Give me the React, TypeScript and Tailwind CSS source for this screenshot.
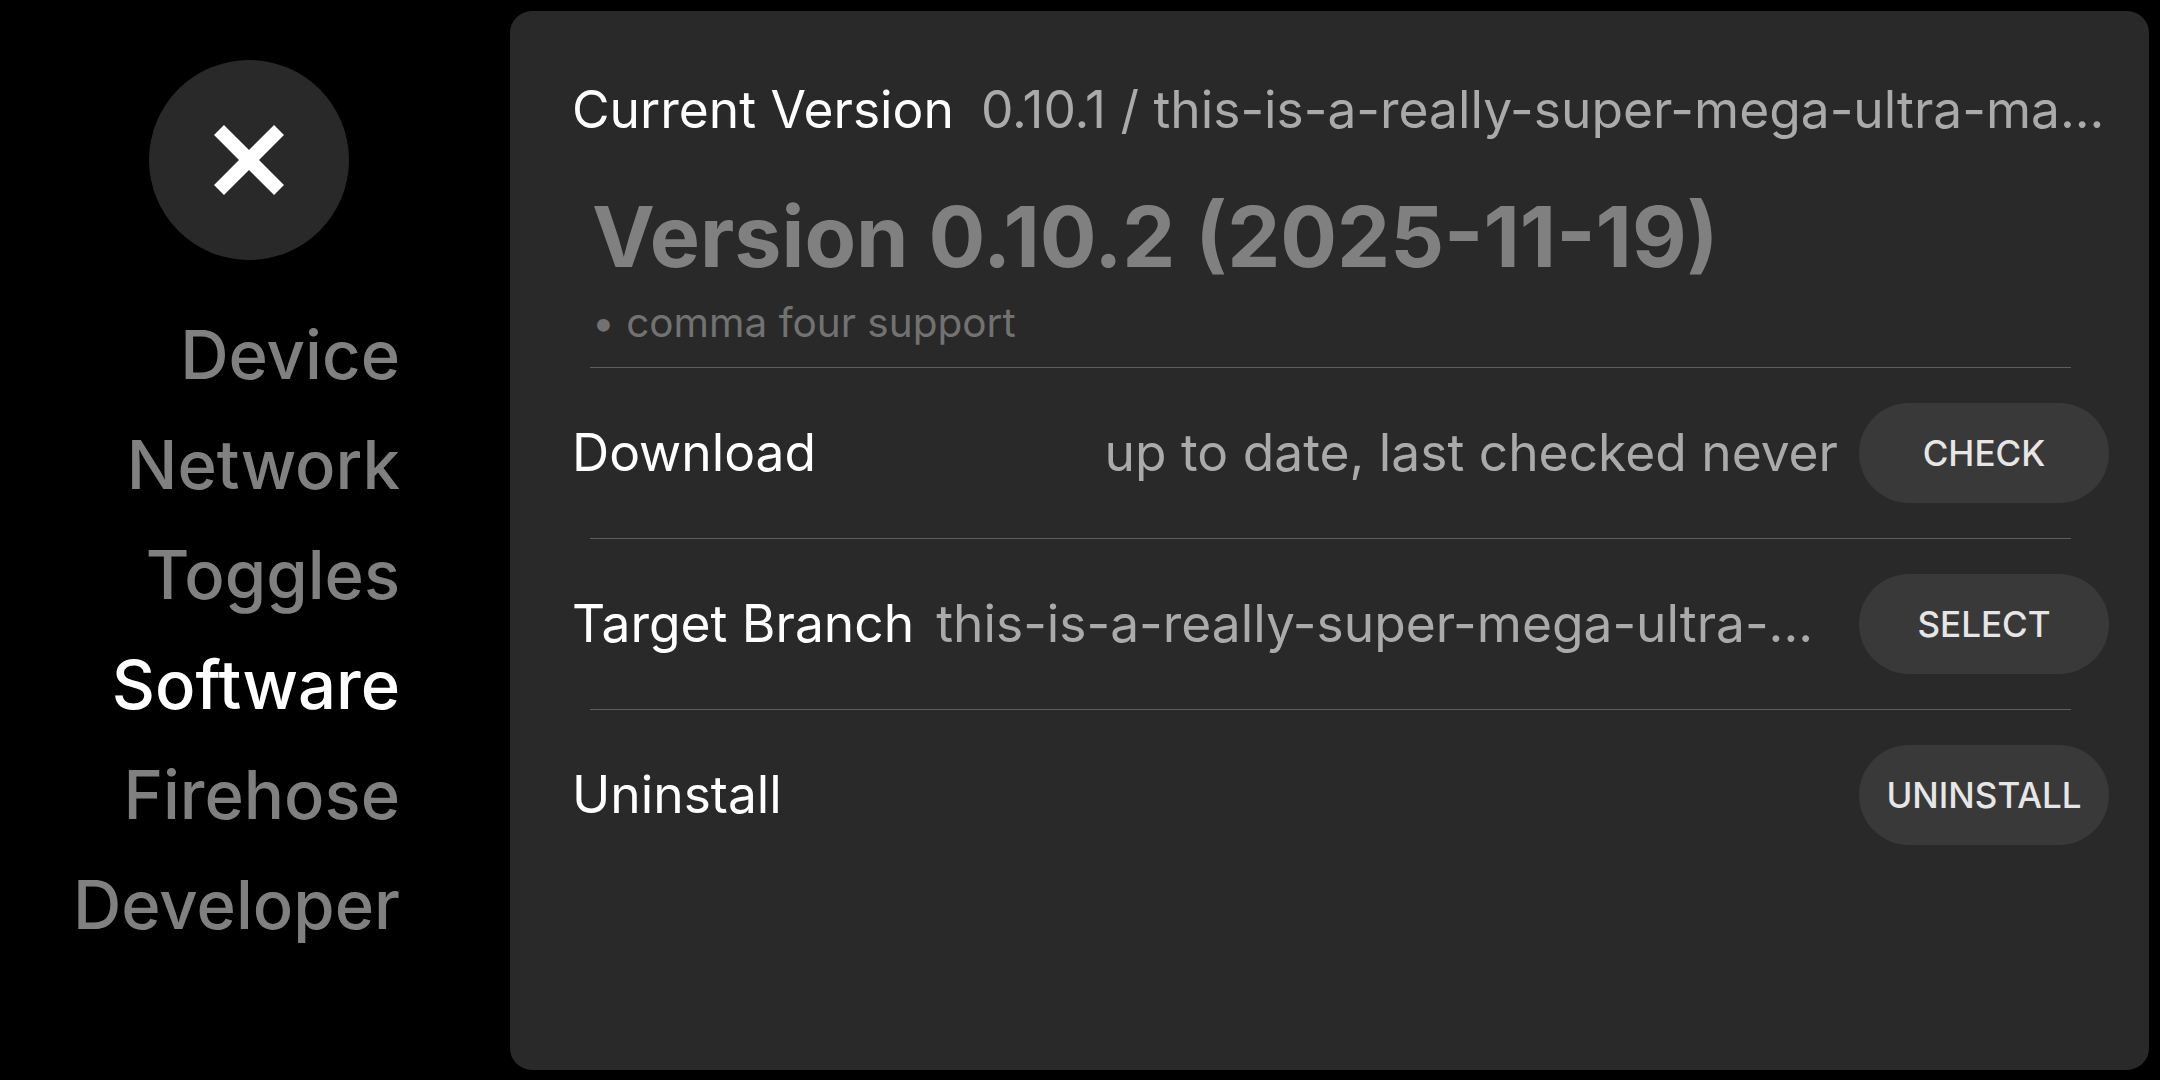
import React from "react";

const navItems = ["Device", "Network", "Toggles", "Software", "Firehose", "Developer"];

function CloseIcon() {
  return (
    <svg width="70" height="70" viewBox="0 0 70 70">
      <line x1="5" y1="5" x2="65" y2="65" stroke="#ffffff" strokeWidth="14" />
      <line x1="65" y1="5" x2="5" y2="65" stroke="#ffffff" strokeWidth="14" />
    </svg>
  );
}

function Pill({ label }: { label: string }) {
  return (
    <div className="flex h-[100px] w-[250px] shrink-0 items-center justify-center rounded-full bg-[#393939] text-[35px] font-medium text-[#e6e6e6]">
      {label}
    </div>
  );
}

function Divider() {
  return <div className="ml-[18px] mr-[38px] h-px bg-[#5e5e5e]" />;
}

export default function App() {
  return (
    <div className="flex h-[1080px] w-[2160px] overflow-hidden bg-black font-['Inter',sans-serif]">
      <aside className="flex w-[510px] shrink-0 flex-col">
        <div className="ml-[149px] mt-[60px] flex h-[200px] w-[200px] items-center justify-center rounded-full bg-[#292929]">
          <CloseIcon />
        </div>
        <nav className="mt-[40px] flex flex-col items-end pr-[110px]">
          {navItems.map((n) => (
            <div
              key={n}
              className={
                "h-[110px] text-[67px] font-medium leading-[110px] " +
                (n === "Software" ? "text-white" : "text-[#808080]")
              }
            >
              {n}
            </div>
          ))}
        </nav>
      </aside>

      <main className="mb-[10px] mr-[11px] mt-[11px] flex min-w-0 flex-1 flex-col rounded-[22px] bg-[#292929] pl-[62px] pr-[40px] pt-[68px]">
        <div className="flex h-[60px] min-w-0 items-center whitespace-nowrap text-[51.5px] leading-[60px]">
          <span className="shrink-0 text-white">Current Version</span>
          <span className="ml-[27px] min-w-0 overflow-hidden text-[#aaaaaa]">
            0.10.1 / this-is-a-really-super-mega-ultra-ma...
          </span>
        </div>
        <div className="ml-[20px] mt-[55px] h-[84px] whitespace-nowrap text-[84.3px] font-bold leading-[84px] text-[#808080]">
          Version 0.10.2 (2025-11-19)
        </div>
        <div className="ml-[20px] mt-[21px] h-[48px] whitespace-nowrap text-[40.5px] leading-[48px] text-[#727272]">
          • comma four support
        </div>
        <div className="mt-[20px]">
          <Divider />
        </div>

        <div className="flex h-[170px] min-w-0 items-center whitespace-nowrap text-[51.5px]">
          <span className="shrink-0 text-white">Download</span>
          <span className="flex-1" />
          <span className="mr-[21px] text-[#aaaaaa]">up to date, last checked never</span>
          <Pill label="CHECK" />
        </div>
        <Divider />

        <div className="flex h-[170px] min-w-0 items-center whitespace-nowrap text-[51.5px]">
          <span className="shrink-0 text-white">Target Branch</span>
          <span className="ml-[22px] min-w-0 flex-1 overflow-hidden text-[#aaaaaa]">
            this-is-a-really-super-mega-ultra-...
          </span>
          <Pill label="SELECT" />
        </div>
        <Divider />

        <div className="flex h-[170px] min-w-0 items-center whitespace-nowrap text-[51.5px]">
          <span className="text-white">Uninstall</span>
          <span className="flex-1" />
          <Pill label="UNINSTALL" />
        </div>
      </main>
    </div>
  );
}
